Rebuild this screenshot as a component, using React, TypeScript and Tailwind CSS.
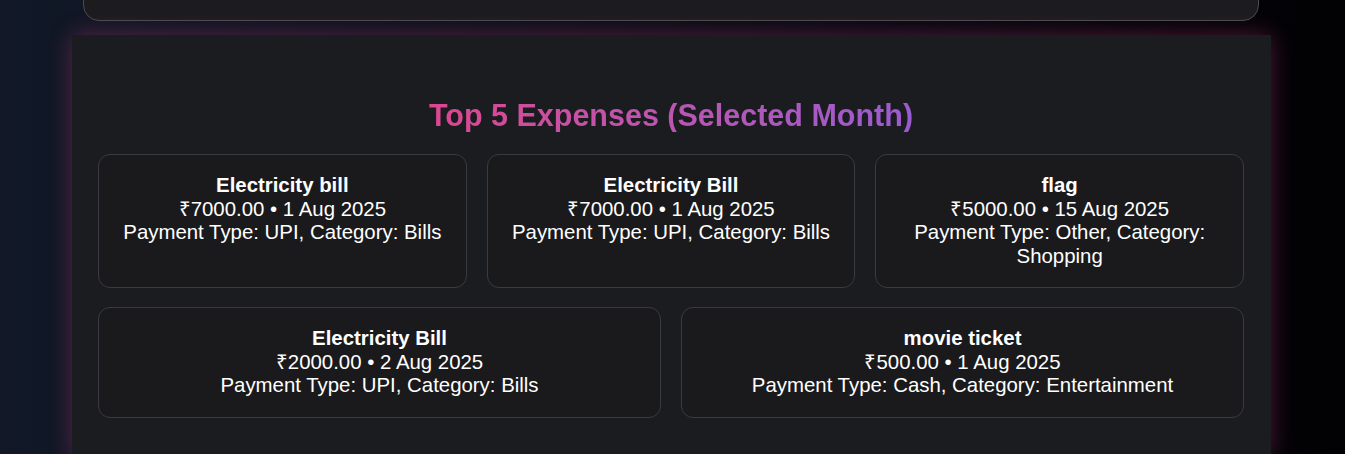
const expenses = [
  {
    title: 'Electricity bill',
    amount: '₹7000.00',
    date: '1 Aug 2025',
    paymentType: 'UPI',
    category: 'Bills',
  },
  {
    title: 'Electricity Bill',
    amount: '₹7000.00',
    date: '1 Aug 2025',
    paymentType: 'UPI',
    category: 'Bills',
  },
  {
    title: 'flag',
    amount: '₹5000.00',
    date: '15 Aug 2025',
    paymentType: 'Other',
    category: 'Shopping',
  },
  {
    title: 'Electricity Bill',
    amount: '₹2000.00',
    date: '2 Aug 2025',
    paymentType: 'UPI',
    category: 'Bills',
  },
  {
    title: 'movie ticket',
    amount: '₹500.00',
    date: '1 Aug 2025',
    paymentType: 'Cash',
    category: 'Entertainment',
  },
];

type Expense = (typeof expenses)[number];

const ExpenseCard = ({ expense }: { expense: Expense }) => {
  return (
    <div className="flex-[1_1_300px] rounded-xl border border-[#3a3b40] bg-[#1a1a1c] px-5 py-[19px] text-center text-[20.4px] text-white">
      <div className="font-bold leading-[23px]">{expense.title}</div>
      <div className="leading-[24px]">
        {expense.amount} • {expense.date}
      </div>
      <div className="leading-[23.5px]">
        Payment Type: {expense.paymentType}, Category: {expense.category}
      </div>
    </div>
  );
};

export default function App() {
  return (
    <div className="min-h-[454px] overflow-hidden bg-gradient-to-r from-[#111827] via-[#0a0d16] to-[#020205] font-['Liberation_Sans',Arial,sans-serif]">
      {/* bottom of the previous card, scrolled mostly out of view */}
      <div className="-mt-[100px] mr-[86px] ml-[83px] h-[121px] rounded-2xl border border-[#4a4a50] bg-[#1c1c1f]" />

      <section className="mt-[14px] mr-[74px] ml-[72px] bg-[#1b1c1f] pt-[62px] pr-[27px] pb-10 pl-[26px] shadow-[0_0_22px_rgba(236,72,153,0.32)]">
        <h2 className="mb-[21px] text-center text-[30.5px] leading-[36px] font-bold">
          <span className="bg-gradient-to-r from-[#db4690] to-[#9a5bd0] bg-clip-text text-transparent">
            Top 5 Expenses (Selected Month)
          </span>
        </h2>
        <div className="flex flex-wrap gap-x-5 gap-y-[19px]">
          {expenses.map((expense, i) => (
            <ExpenseCard key={i} expense={expense} />
          ))}
        </div>
      </section>
    </div>
  );
}
